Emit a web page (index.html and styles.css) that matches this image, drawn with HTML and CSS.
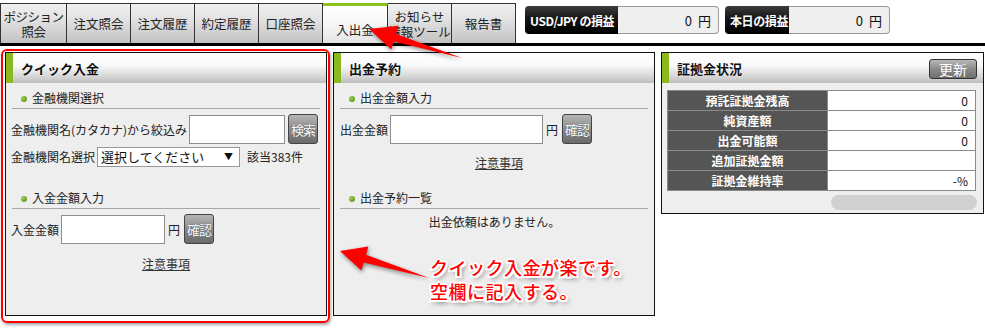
FILE: index.html
```html
<!DOCTYPE html>
<html lang="ja">

<head>
    <meta charset="utf-8">
    <title>入出金</title>
    <link rel="stylesheet" href="styles.css">
</head>

<body>
    <header class="topbar">
        <ul class="tabs">
            <li class="tab first">ポジション<br>照会</li>
            <li class="tab">注文照会</li>
            <li class="tab">注文履歴</li>
            <li class="tab">約定履歴</li>
            <li class="tab">口座照会</li>
            <li class="tab valgt">入出金</li>
            <li class="tab">お知らせ<br>情報ツール</li>
            <li class="tab">報告書</li>
        </ul>
        <div class="pl">
            <div class="pl-label usd">USD/JPY の損益</div>
            <div class="pl-value">0&nbsp;円</div>
        </div>
        <div class="pl">
            <div class="pl-label day">本日の損益</div>
            <div class="pl-value">0&nbsp;円</div>
        </div>
    </header>

    <main class="panels">
        <section class="panel tall">
            <h2 class="panel-head">クイック入金</h2>
            <h3 class="sec-title">金融機関選択</h3>
            <div class="form-row">
                <label>金融機関名(カタカナ)から絞込み</label>
                <input type="text" class="inp kana">
                <button class="btn">検索</button>
            </div>
            <div class="form-row tight">
                <label>金融機関名選択</label>
                <div class="select">選択してください<span>▼</span></div>
                <span class="count">該当383件</span>
            </div>
            <h3 class="sec-title second">入金金額入力</h3>
            <div class="form-row">
                <label>入金金額</label>
                <input type="text" class="inp deposit">
                <span class="yen">円</span>
                <button class="btn">確認</button>
            </div>
            <p class="note"><a href="#">注意事項</a></p>
        </section>

        <section class="panel tall">
            <h2 class="panel-head">出金予約</h2>
            <h3 class="sec-title">出金金額入力</h3>
            <div class="form-row">
                <label>出金金額</label>
                <input type="text" class="inp withdraw">
                <span class="yen">円</span>
                <button class="btn">確認</button>
            </div>
            <p class="note first-note"><a href="#">注意事項</a></p>
            <h3 class="sec-title third">出金予約一覧</h3>
            <p class="empty">出金依頼はありません。</p>
        </section>

        <section class="panel margin">
            <h2 class="panel-head">証拠金状況<button class="refresh">更新</button></h2>
            <table class="status">
                <tr><th>預託証拠金残高</th><td>0</td></tr>
                <tr><th>純資産額</th><td>0</td></tr>
                <tr><th>出金可能額</th><td>0</td></tr>
                <tr><th>追加証拠金額</th><td></td></tr>
                <tr><th>証拠金維持率</th><td>-%</td></tr>
            </table>
            <div class="bar"></div>
        </section>
    </main>

    <!-- annotations on top of the screenshot -->
    <div class="mark-box"></div>
    <svg class="arrows" width="985" height="333" viewBox="0 0 985 333">
        <polygon points="369,29 398.4,25.8 396,33.9 462,58 393.6,41.5 391.2,49.6" />
        <polygon points="340,251 368.4,246.6 366.1,254.8 429,278 363.7,262.4 361.4,270.6" />
    </svg>
    <p class="callout">クイック入金が楽です。<br>空欄に記入する。</p>
</body>

</html>
```

FILE: styles.css
```css
* {
    box-sizing: border-box;
}

body {
    margin: 0;
    background: #fff;
    color: #222;
    font-family: "Noto Sans CJK JP", "Noto Sans", sans-serif;
    font-size: 12px;
    position: relative;
    width: 985px;
    height: 333px;
    overflow: hidden;
}

/* top bar */

.topbar {
    display: flex;
    align-items: flex-start;
    height: 46px;
    border-bottom: 3px solid #000;
}

.tabs {
    display: flex;
    list-style: none;
    margin: 3px 0 0 0;
    padding: 0;
    height: 40px;
}

.tab {
    width: 64px;
    display: flex;
    align-items: center;
    justify-content: center;
    text-align: center;
    line-height: 15px;
    border: 1px solid #333;
    border-left: 0;
    border-bottom: 0;
    background: linear-gradient(#f0f0f0, #e2e2e2 40%, #c2c2c2);
    color: #222;
    white-space: nowrap;
    font-size: 12.5px;
}

.tab.first {
    width: 67px;
    border-left: 1px solid #333;
    letter-spacing: -0.5px;
}

.tab.valgt {
    width: 65px;
    align-items: flex-end;
    padding-bottom: 6px;
    border-top: 3px solid #8cc21e;
    background: linear-gradient(#fff, #f6f6f6 50%, #e4e4e4);
}

.pl {
    display: flex;
    height: 28px;
    margin: 6px 0 0 9px;
}

.pl + .pl {
    margin-left: 6px;
}

.pl-label {
    display: flex;
    align-items: center;
    padding-left: 5px;
    background: linear-gradient(#3c3c3c, #111 50%, #000);
    color: #fff;
    font-weight: bold;
    border-radius: 4px 0 0 4px;
    letter-spacing: -0.4px;
    white-space: nowrap;
}

.pl-label.usd {
    width: 93px;
}

.pl-label.day {
    width: 64px;
}

.pl-value {
    width: 101px;
    display: flex;
    align-items: center;
    justify-content: flex-end;
    padding-right: 7px;
    background: #efefef;
    border: 1px solid #9a9a9a;
    border-left: 0;
    border-radius: 0 4px 4px 0;
    font-size: 13px;
    color: #111;
    word-spacing: 3px;
}

/* panels */

.panels {
    display: flex;
    align-items: flex-start;
    gap: 6px;
    margin: 6px 0 0 5px;
}

.panel {
    width: 322px;
    border: 1px solid #111;
    background: #eeeeee;
}

.panel.tall {
    height: 264px;
}

.panel.margin {
    width: 323px;
    padding-bottom: 3px;
}

.panel-head {
    display: flex;
    align-items: center;
    justify-content: space-between;
    height: 30px;
    margin: 0;
    padding: 0 6px 0 8px;
    border-left: 7px solid #8cb91e;
    background: linear-gradient(#fff, #fafafa 40%, #d4d4d4 80%, #bdbdbd);
    font-size: 13px;
    font-weight: bold;
    color: #111;
    text-shadow: 0 0 2px #fff;
}

.refresh {
    width: 48px;
    height: 20px;
    margin-top: 2px;
    padding: 0;
    border: 1px solid #333;
    border-radius: 3px;
    background: linear-gradient(#b8b8b8, #8a8a8a 50%, #6e6e6e);
    color: #fff;
    font-family: inherit;
    font-size: 14px;
    line-height: 16px;
    text-shadow: none;
}

.sec-title {
    position: relative;
    margin: 0 6px;
    padding: 8px 0 3px 20px;
    line-height: 14px;
    font-size: 12px;
    font-weight: normal;
    border-bottom: 1px solid #a8a8a8;
}

.sec-title::before {
    content: "";
    position: absolute;
    left: 9px;
    top: 13px;
    width: 6px;
    height: 6px;
    border-radius: 50%;
    background: radial-gradient(circle at 35% 35%, #9fd04a, #4f8412);
}

.sec-title.second {
    margin-top: 16px;
}

.sec-title.third {
    margin-top: 13px;
}

.form-row {
    display: flex;
    align-items: center;
    margin: 5px 0 0 5px;
    height: 30px;
}

.panel + .panel .form-row {
    margin-left: 6px;
}

.form-row.tight {
    margin-top: 2px;
    height: 21px;
}

.inp {
    height: 29px;
    margin: 0 0 0 2px;
    border: 1px solid #8d8d8d;
    background: #fff;
    padding: 2px 4px;
    font-family: inherit;
}

.inp.kana {
    width: 96px;
}

.inp.deposit {
    width: 104px;
}

.inp.withdraw {
    width: 153px;
}

.yen {
    margin-left: 3px;
}

.btn {
    width: 30px;
    height: 30px;
    margin-left: 3px;
    padding: 0;
    border: 1px solid #444;
    border-radius: 3px;
    background: linear-gradient(#b5b5b5, #8c8c8c 50%, #6a6a6a);
    color: #fff;
    font-family: inherit;
    font-size: 13px;
    letter-spacing: -1px;
    text-shadow: 0 0 1px #333;
}

.yen + .btn {
    margin-left: 4px;
}

.select {
    position: relative;
    width: 143px;
    height: 20px;
    margin-left: 2px;
    padding: 0 0 0 3px;
    border: 1px solid #999;
    background: #fff;
    line-height: 18px;
    font-size: 13px;
    color: #111;
}

.select span {
    position: absolute;
    right: 6px;
    top: 0;
    font-size: 9px;
}

.count {
    margin-left: 7px;
}

.note {
    margin: 13px 0 0;
    text-align: center;
    line-height: 14px;
}

.note.first-note {
    margin-top: 12px;
    padding-left: 10px;
}

.note a {
    color: #333;
}

.empty {
    margin: 6px 0 0;
    text-align: center;
    line-height: 14px;
    padding-left: 1px;
}

.status {
    width: 309px;
    margin: 7px 0 0 5px;
    border-collapse: collapse;
}

.status th,
.status td {
    height: 20px;
    padding: 0 7px 0 0;
    border: 1px solid #8a8a8a;
    font-size: 12px;
    line-height: 18px;
}

.status th {
    width: 160px;
    padding: 0;
    background: #555;
    color: #fff;
    text-align: center;
    font-weight: bold;
}

.status td {
    background: #fff;
    text-align: right;
    color: #111;
}

.bar {
    width: 146px;
    height: 15px;
    margin: 4px 0 0 169px;
    background: #d0d0d0;
    border-radius: 8px;
}

/* annotations */

.mark-box {
    position: absolute;
    left: 1px;
    top: 49px;
    width: 329px;
    height: 274px;
    border: 2px solid #f00;
    border-radius: 6px;
    box-shadow: 1px 2px 3px rgba(0, 0, 0, 0.35);
}

.arrows {
    position: absolute;
    left: 0;
    top: 0;
    pointer-events: none;
}

.arrows polygon {
    fill: #ff0000;
    filter: drop-shadow(1px 2px 2px rgba(0, 0, 0, 0.45));
}

.callout {
    position: absolute;
    left: 430px;
    top: 255px;
    margin: 0;
    color: #f00;
    font-size: 18px;
    font-weight: 500;
    line-height: 24px;
    letter-spacing: 0.5px;
    text-shadow: -1px -1px 0 #fff, 1px -1px 0 #fff, -1px 1px 0 #fff, 1px 1px 0 #fff,
        0 -2px 0 #fff, 0 2px 0 #fff, -2px 0 0 #fff, 2px 0 0 #fff,
        2px 2px 0 #fff, -2px 2px 0 #fff, 2px 3px 5px rgba(0, 0, 0, 0.7);
}
```
